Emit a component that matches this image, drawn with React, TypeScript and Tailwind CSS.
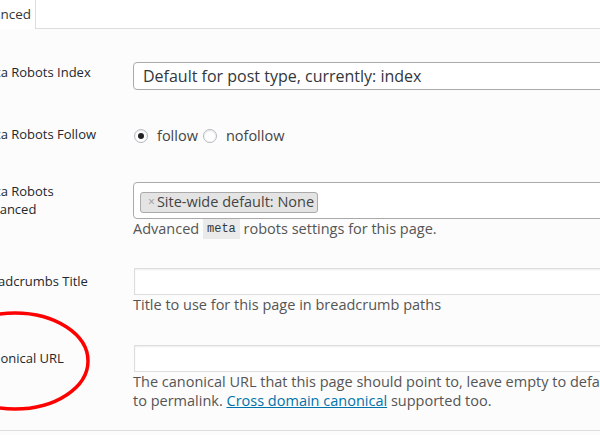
import React from "react";

const font = { fontFamily: '"Open Sans", "Liberation Sans", sans-serif' };

function Radio({ checked }: { checked?: boolean }) {
  return (
    <span className="inline-flex h-[14px] w-[14px] items-center justify-center rounded-full border border-[#b4b9be] bg-white shadow-[inset_0_1px_2px_rgba(0,0,0,0.1)]">
      {checked ? <span className="h-[6px] w-[6px] rounded-full bg-[#222]" /> : null}
    </span>
  );
}

export default function App() {
  return (
    <div
      className="relative h-[435px] w-[600px] overflow-hidden bg-[#fcfcfc] text-[#23282d]"
      style={font}
    >
      {/* tabs */}
      <div className="flex h-[29px] bg-white">
        <div className="-ml-[32px] flex h-[29px] w-[68px] items-center justify-end border-r border-[#ddd] pr-[4px] text-[13.5px] text-[#32373c]">
          Advanced
        </div>
        <div className="flex-1 border-b border-[#ddd]" />
      </div>

      <div className="-ml-[23px] w-[800px]">
        {/* Meta Robots Index */}
        <div className="mt-[33px] flex">
          <div className="w-[156px] text-[13px] leading-5">Meta Robots Index</div>
          <div className="flex h-[28px] w-[600px] items-center rounded-[4px] border border-[#aaa] bg-white pl-[9px] text-[16px] text-[#32373c]">
            Default for post type, currently: index
          </div>
        </div>

        {/* Meta Robots Follow */}
        <div className="mt-[34px] flex">
          <div className="w-[156px] text-[13px] leading-5">Meta Robots Follow</div>
          <div className="flex h-6 items-center pl-[1px] text-[14.5px] text-[#444]">
            <Radio checked />
            <span className="ml-[9px] mr-[5px]">follow</span>
            <Radio />
            <span className="ml-[9px]">nofollow</span>
          </div>
        </div>

        {/* Meta Robots Advanced */}
        <div className="mt-[34px] flex">
          <div className="w-[156px] text-[13px] leading-[18px]">
            Meta Robots
            <br />
            Advanced
          </div>
          <div>
            <div className="h-[37px] w-[600px] rounded-[4px] border border-[#aaa] bg-white pl-[6px] pt-[5px]">
              <span className="inline-flex h-[21px] items-center rounded-[3px] border border-[#aaa] bg-[#e4e4e4] pl-[7px] pr-[3px] text-[14.5px] text-[#444]">
                <span className="mr-[2px] text-[12px] text-[#999]">×</span>
                Site-wide default: None
              </span>
            </div>
            <div className="h-5 text-[14.5px] leading-5 text-[#555]">
              Advanced{" "}
              <code
                className="inline-block bg-[#eaeaea] px-[4px] align-top text-[12px] leading-5 text-[#32373c]"
                style={{ fontFamily: '"Liberation Mono", monospace' }}
              >
                meta
              </code>{" "}
              robots settings for this page.
            </div>
          </div>
        </div>

        {/* Breadcrumbs Title */}
        <div className="mt-[29px] flex">
          <div className="w-[156px] pt-[3px] text-[13px] leading-5">Breadcrumbs Title</div>
          <div>
            <div className="ml-[1px] h-[27px] w-[600px] border border-[#ddd] bg-white shadow-[inset_0_1px_2px_rgba(0,0,0,0.07)]" />
            <div className="text-[14.5px] leading-5 text-[#555]">
              Title to use for this page in breadcrumb paths
            </div>
          </div>
        </div>

        {/* Canonical URL */}
        <div className="mt-[30px] flex">
          <div className="w-[156px] pt-[3px] text-[13px] leading-5">Canonical URL</div>
          <div>
            <div className="ml-[1px] h-[27px] w-[600px] border border-[#ddd] bg-white shadow-[inset_0_1px_2px_rgba(0,0,0,0.07)]" />
            <div className="whitespace-nowrap text-[14.5px] leading-[19px] text-[#555]">
              The canonical URL that this page should point to, leave empty to default
              <br />
              to permalink.{" "}
              <a href="#" className="text-[#0073aa] underline">
                Cross domain canonical
              </a>{" "}
              supported too.
            </div>
          </div>
        </div>
      </div>

      <div className="absolute left-0 right-0 top-[430px] border-b border-[#ddd]" />

      {/* annotation */}
      <svg className="absolute left-0 top-0" width="600" height="435">
        <ellipse cx="15" cy="361" rx="73" ry="48" fill="none" stroke="#f00" strokeWidth="3.5" />
      </svg>
    </div>
  );
}
